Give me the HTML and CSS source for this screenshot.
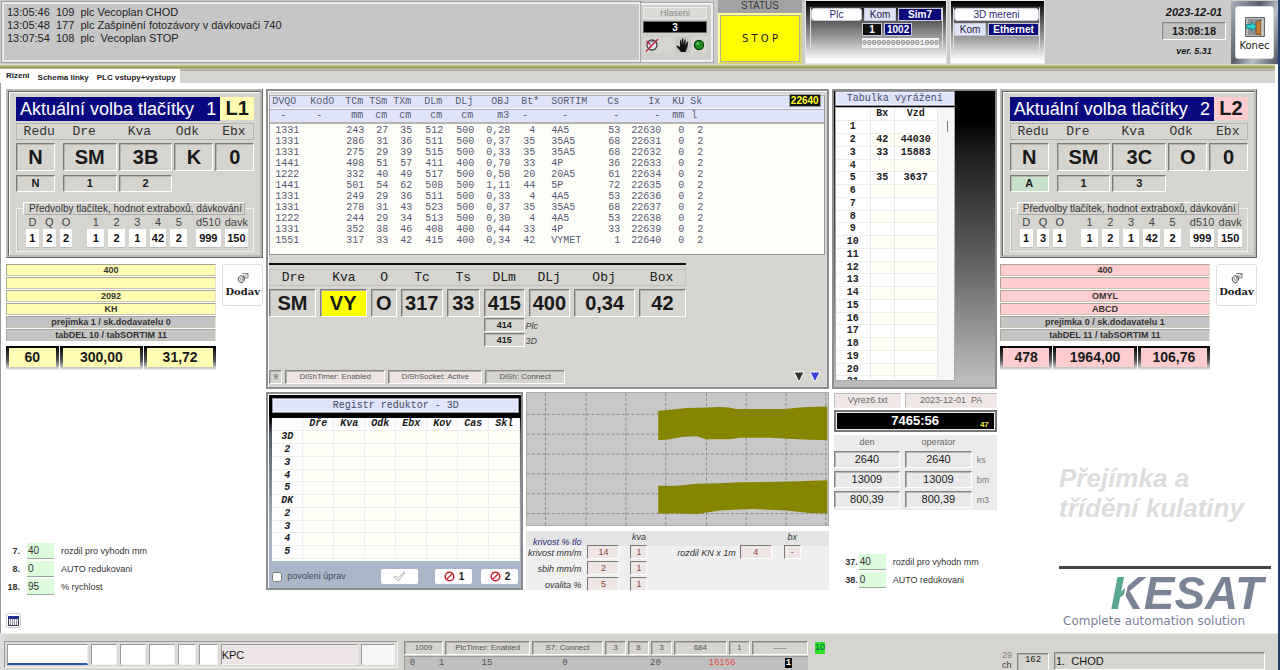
FILE: index.html
```html
<!DOCTYPE html>
<html lang="cs">
<head>
<meta charset="utf-8">
<title>Přejímka a třídění kulatiny</title>
<link rel="stylesheet" href="styles.css">
</head>
<body>
<header class="top">
  <div class="log"><pre>13:05:46  109  plc Vecoplan CHOD
13:05:48  177  plc Zašpinění fotozávory v dávkovači 740
13:07:54  108  plc  Vecoplan STOP</pre></div>
  <section class="alerts">
    <div class="alerts-title">Hlaseni</div>
    <div class="alerts-count">3</div>
    <div class="alerts-icons">
      <svg width="16" height="16" viewBox="0 0 16 16"><circle cx="8" cy="8" r="5" fill="#dfe6f0" stroke="#444" stroke-width="1.3"/><path d="M5.500 5.500a4 4 0 0 1 5 0M6 11l4-6" stroke="#5d7390" stroke-width="1" fill="none"/><path d="M2 14.500L14 2M2.500 4l4 4" stroke="#c8283c" stroke-width="1.400"/></svg>
      <span class="hand"><svg width="16" height="16" viewBox="0 0 16 16"><path d="M6 15L1.500 9.500l1-1L5 10V3.500l1.200-.4L7 8V1.500h1.300L8.700 8l.8-5.500 1.200.2L10.500 8.500l1.700-4 1 .4-1 6.100L10.500 15z" fill="#111"/></svg></span>
      <svg width="12" height="12" viewBox="0 0 12 12"><circle cx="6" cy="6" r="4.600" fill="#1e8a1e" stroke="#0c430c" stroke-width="1.200"/><circle cx="4.800" cy="4.500" r="1.500" fill="#5fc25f"/></svg>
    </div>
  </section>
  <section class="status">
    <div class="status-title">STATUS</div>
    <button class="stop" type="button">S T O P</button>
  </section>
  <section class="comm comm-plc">
    <div class="comm-inner">
      <div class="comm-row"><span class="chip chip-name">Plc</span><span class="chip chip-kom">Kom</span><span class="chip chip-navy grow">Sim7</span></div>
      <div class="comm-row offset"><span class="chip chip-black">1</span><span class="chip chip-navy">1002</span></div>
      <div class="comm-row offset"><span class="bits">0000000000001000</span></div>
    </div>
  </section>
  <section class="comm comm-3d">
    <div class="comm-inner">
      <div class="comm-row"><span class="chip chip-name grow">3D mereni</span></div>
      <div class="comm-row"><span class="chip chip-kom">Kom</span><span class="chip chip-navy grow">Ethernet</span></div>
    </div>
  </section>
  <div class="clock">
    <div class="date">2023-12-01</div>
    <div class="time sunk">13:08:18</div>
    <div class="ver">ver. 5.31</div>
  </div>
  <div class="exit">
    <button type="button">
      <svg width="20" height="20" viewBox="0 0 20 20"><path d="M.5.5h19v19H.5z" fill="#b9b9b9" stroke="#666"/><path d="M3 2h14v16H3z" fill="#8a9298"/><path d="M11 5l5-2v15l-5-1z" fill="#c47f35" stroke="#6b3d10" stroke-width=".8"/><path d="M17 3v15" stroke="#eee"/><path d="M1.500 7.500h5V5l5 4.500-5 4.500v-2.500h-5z" fill="#25d3d3" stroke="#0b6b6b" stroke-width=".6"/></svg>
      <span>Konec</span>
    </button>
  </div>
</header>

<nav class="tabs">
  <a href="#rizeni" class="active">Rizeni</a><a href="#schema">Schema linky</a><a href="#plc">PLC vstupy+vystupy</a>
</nav>

<main class="board">
  <div class="col side line1">
    <section class="panel choice">
      <div class="choice-head"><h2><span>Aktuální volba tlačítky</span><span>1</span></h2><b>L1</b></div>
      <div class="keys key-labels"><span>Redu</span><span>Dre</span><span>Kva</span><span>Odk</span><span>Ebx</span></div>
      <div class="keys big"><span>N</span><span>SM</span><span>3B</span><span>K</span><span>0</span></div>
      <div class="keys small"><span>N</span><span>1</span><span>2</span></div>
      <fieldset>
        <legend>Předvolby tlačítek, hodnot extraboxů, dávkování</legend>
        <div class="presets">
          <label class="s">D<input value="1"></label><label class="s">Q<input value="2"></label><label class="s">O<input value="2"></label>
          <label class="m first">1<input value="1"></label><label class="m">2<input value="2"></label><label class="m">3<input value="1"></label><label class="m">4<input value="42"></label><label class="m">5<input value="2"></label>
          <label class="l first">d510<input value="999"></label><label class="l">davk<input value="150"></label>
        </div>
      </fieldset>
    </section>
    <section class="supplier">
      <div class="sup-list">
        <p>400</p><p></p><p>2092</p><p>KH</p><p class="grey">prejimka 1 / sk.dodavatelu 0</p><p class="grey">tabDEL 10 / tabSORTIM 11</p>
        <div class="totals"><span class="t1">60</span><span class="t2">300,00</span><span class="t3">31,72</span></div>
      </div>
      <button class="dodav" type="button"><svg width="12" height="12" viewBox="0 0 12 12"><path d="M5 1.500h6v4.500H7M6 3.500l2 1 3-3" fill="#f6f3e4" stroke="#666" stroke-width=".8"/><path d="M1 6l3-2.500 3 1.500.5 3L5 11 2 9.500z" fill="#eee" stroke="#444" stroke-width=".9"/><path d="M3 6l2 3M5 5l1.500 3" stroke="#555" stroke-width=".7"/></svg><span>Dodav</span></button>
    </section>
    <div class="settings">
      <label><b>7.</b><input value="40"><span>rozdil pro vyhodn mm</span></label>
      <label><b>8.</b><input value="0"><span>AUTO redukovani</span></label>
      <label><b>18.</b><input value="95"><span>% rychlost</span></label>
    </div>
    <button class="grid-btn" type="button" aria-label="Tabulka"><svg width="11" height="10" viewBox="0 0 11 10"><path d="M.5.500h10v9H.5z" fill="#fff" stroke="#334"/><path d="M0 0h11v3H0z" fill="#22308c"/><path d="M2.500 3v6M4.500 3v6M6.500 3v6M8.500 3v6" stroke="#778" stroke-width=".8"/></svg></button>
  </div>

  <div class="col center">
    <section class="panel live">
      <div class="logs">
        <table>
          <colgroup><col class="w34"><col class="w32"><col class="w29"><col class="w24"><col class="w24"><col class="w31"><col class="w31"><col class="w36"><col class="w30"><col class="w50"><col class="w30"><col class="w41"><col class="w24"><col class="w18"><col></colgroup>
          <thead>
            <tr><th>DVQO</th><th>KodO</th><th>TCm</th><th>TSm</th><th>TXm</th><th>DLm</th><th>DLj</th><th>OBJ</th><th>Bt*</th><th class="ml">SORTIM</th><th>Cs</th><th>Ix</th><th>KU</th><th>Sk</th><th></th></tr>
            <tr><th class="c">-</th><th class="c">-</th><th>mm</th><th>cm</th><th>cm</th><th>cm</th><th>cm</th><th>m3</th><th class="c">-</th><th class="c">-</th><th>-</th><th>-</th><th>mm</th><th class="c">l</th><th></th></tr>
          </thead>
          <tbody>
            <tr><td>1331</td><td></td><td>243</td><td>27</td><td>35</td><td>512</td><td>500</td><td>0,28</td><td>4</td><td>4A5</td><td>53</td><td>22630</td><td>0</td><td>2</td><td></td></tr>
            <tr><td>1331</td><td></td><td>286</td><td>31</td><td>36</td><td>511</td><td>500</td><td>0,37</td><td>35</td><td>35A5</td><td>68</td><td>22631</td><td>0</td><td>2</td><td></td></tr>
            <tr><td>1331</td><td></td><td>275</td><td>29</td><td>39</td><td>515</td><td>500</td><td>0,33</td><td>35</td><td>35A5</td><td>68</td><td>22632</td><td>0</td><td>2</td><td></td></tr>
            <tr><td>1441</td><td></td><td>498</td><td>51</td><td>57</td><td>411</td><td>400</td><td>0,79</td><td>33</td><td>4P</td><td>36</td><td>22633</td><td>0</td><td>2</td><td></td></tr>
            <tr><td>1222</td><td></td><td>332</td><td>40</td><td>49</td><td>517</td><td>500</td><td>0,58</td><td>20</td><td>20A5</td><td>61</td><td>22634</td><td>0</td><td>2</td><td></td></tr>
            <tr><td>1441</td><td></td><td>501</td><td>54</td><td>62</td><td>508</td><td>500</td><td>1,11</td><td>44</td><td>5P</td><td>72</td><td>22635</td><td>0</td><td>2</td><td></td></tr>
            <tr><td>1331</td><td></td><td>249</td><td>29</td><td>36</td><td>511</td><td>500</td><td>0,33</td><td>4</td><td>4A5</td><td>53</td><td>22636</td><td>0</td><td>2</td><td></td></tr>
            <tr><td>1331</td><td></td><td>278</td><td>31</td><td>43</td><td>523</td><td>500</td><td>0,37</td><td>35</td><td>35A5</td><td>68</td><td>22637</td><td>0</td><td>2</td><td></td></tr>
            <tr><td>1222</td><td></td><td>244</td><td>29</td><td>34</td><td>513</td><td>500</td><td>0,30</td><td>4</td><td>4A5</td><td>53</td><td>22638</td><td>0</td><td>2</td><td></td></tr>
            <tr><td>1331</td><td></td><td>352</td><td>38</td><td>46</td><td>408</td><td>400</td><td>0,44</td><td>33</td><td>4P</td><td>33</td><td>22639</td><td>0</td><td>2</td><td></td></tr>
            <tr><td>1551</td><td></td><td>317</td><td>33</td><td>42</td><td>415</td><td>400</td><td>0,34</td><td>42</td><td>VYMET</td><td>1</td><td>22640</td><td>0</td><td>2</td><td></td></tr>
          </tbody>
        </table>
        <span class="last-ix">22640</span>
      </div>
      <div class="current">
        <div class="cur-grid cur-labels"><span>Dre</span><span>Kva</span><span>O</span><span>Tc</span><span>Ts</span><span>DLm</span><span>DLj</span><span>Obj</span><span>Box</span></div>
        <div class="cur-grid cur-values"><b>SM</b><b class="yellow">VY</b><b>O</b><b>317</b><b>33</b><b>415</b><b>400</b><b>0,34</b><b>42</b></div>
        <div class="cur-grid cur-sub"><b>414</b><i>Plc</i><b>415</b><i>3D</i></div>
      </div>
      <div class="live-status">
        <span class="sunk">9</span><span class="sunk pink w100">DiShTimer: Enabled</span><span class="sunk pink w94">DiShSocket: Active</span><span class="sunk w80">DiSh: Connect</span>
        <svg class="arrows" width="28" height="14" viewBox="0 0 28 14"><path d="M2 2h10L7 12z" fill="#333" stroke="#fff"/><path d="M18 2h10l-5 10z" fill="#3c3cd8" stroke="#fff"/></svg>
      </div>
    </section>

    <div class="lower">
      <section class="panel reg">
        <h3>Registr reduktor - 3D</h3>
        <table>
          <thead><tr><th></th><th>Dře</th><th>Kva</th><th>Odk</th><th>Ebx</th><th>Kov</th><th>Čas</th><th>Skl</th></tr></thead>
          <tbody>
            <tr><th>3D</th><td></td><td></td><td></td><td></td><td></td><td></td><td></td></tr>
            <tr><th>2</th><td></td><td></td><td></td><td></td><td></td><td></td><td></td></tr>
            <tr><th>3</th><td></td><td></td><td></td><td></td><td></td><td></td><td></td></tr>
            <tr><th>4</th><td></td><td></td><td></td><td></td><td></td><td></td><td></td></tr>
            <tr><th>5</th><td></td><td></td><td></td><td></td><td></td><td></td><td></td></tr>
            <tr><th>DK</th><td></td><td></td><td></td><td></td><td></td><td></td><td></td></tr>
            <tr><th>2</th><td></td><td></td><td></td><td></td><td></td><td></td><td></td></tr>
            <tr><th>3</th><td></td><td></td><td></td><td></td><td></td><td></td><td></td></tr>
            <tr><th>4</th><td></td><td></td><td></td><td></td><td></td><td></td><td></td></tr>
            <tr><th>5</th><td></td><td></td><td></td><td></td><td></td><td></td><td></td></tr>
          </tbody>
        </table>
        <div class="reg-foot">
          <label><input type="checkbox"> povoleni úprav</label>
          <button type="button" class="ok" aria-label="OK"><svg width="13" height="11" viewBox="0 0 13 11"><path d="M1 6l2-1 2 2.500L11 1l1 .5L5.500 10z" fill="#fff" stroke="#aaa" stroke-width=".9"/></svg></button>
          <button type="button"><svg width="11" height="11" viewBox="0 0 11 11"><circle cx="5.500" cy="5.500" r="4.300" fill="none" stroke="#c8202c" stroke-width="1.500"/><path d="M2.500 8.500l6-6" stroke="#c8202c" stroke-width="1.300"/></svg>1</button>
          <button type="button"><svg width="11" height="11" viewBox="0 0 11 11"><circle cx="5.500" cy="5.500" r="4.300" fill="none" stroke="#c8202c" stroke-width="1.500"/><path d="M2.500 8.500l6-6" stroke="#c8202c" stroke-width="1.300"/></svg>2</button>
        </div>
      </section>
      <div class="profile">
        <svg class="chart" viewBox="0 0 302 133" preserveAspectRatio="none">
          <path d="M18.500 0v133M59.500 0v133M99.500 0v133M139.500 0v133M180.500 0v133M220.500 0v133M260.500 0v133M300.500 0v133M0 21.500h302M0 41.500h302M0 61.500h302M0 81.500h302M0 101.500h302M0 121.500h302" stroke="#8c8c8c" stroke-dasharray="3 2" fill="none"/>
          <path d="M132 18L144 17 161 15 180 14.500 194 14 203 14.500 210 16H260L274 14.500 284 14 302 13.500V47.500L284 47 262 46 244 45 214 45 204 46.500 180 46.500 171 43.500 157 44 144 46.500 132 47.500z" fill="#868500"/>
          <path d="M132 93.500L150 93.500 171 91.500 194 91 214 90 250 89.500 274 89 286 88.500 302 88V121.500L284 121 261 118.500 227 117 214 117.500 194 118.500 171 122 150 121.500 132 121.500z" fill="#868500"/>
        </svg>
        <div class="params">
          <div class="pgrid left">
            <span class="navy">krivost % tlo</span><i></i><span class="mid">kva</span>
            <label for="kr">krivost mm/m</label><input id="kr" value="14"><input aria-label="kva krivost" value="1">
            <label for="sb">sbih mm/m</label><input id="sb" value="2"><input aria-label="kva sbih" value="1">
            <label for="ov">ovalita %</label><input id="ov" value="5"><input aria-label="kva ovalita" value="1">
          </div>
          <div class="pgrid right">
            <i></i><i></i><span class="mid">bx</span>
            <label for="kn">rozdil KN x 1m</label><input id="kn" value="4"><input aria-label="bx" value="-">
          </div>
        </div>
      </div>
    </div>
  </div>

  <div class="col third">
    <section class="panel eject">
      <h3>Tabulka vyrážení</h3>
      <div class="eject-box">
        <table>
          <thead><tr><th></th><th>Bx</th><th>Vzd</th></tr></thead>
          <tbody>
            <tr><th>1</th><td></td><td></td></tr><tr><th>2</th><td>42</td><td>44030</td></tr><tr><th>3</th><td>33</td><td>15883</td></tr><tr><th>4</th><td></td><td></td></tr><tr><th>5</th><td>35</td><td>3637</td></tr>
            <tr><th>6</th><td></td><td></td></tr><tr><th>7</th><td></td><td></td></tr><tr><th>8</th><td></td><td></td></tr><tr><th>9</th><td></td><td></td></tr><tr><th>10</th><td></td><td></td></tr>
            <tr><th>11</th><td></td><td></td></tr><tr><th>12</th><td></td><td></td></tr><tr><th>13</th><td></td><td></td></tr><tr><th>14</th><td></td><td></td></tr><tr><th>15</th><td></td><td></td></tr>
            <tr><th>16</th><td></td><td></td></tr><tr><th>17</th><td></td><td></td></tr><tr><th>18</th><td></td><td></td></tr><tr><th>19</th><td></td><td></td></tr><tr><th>20</th><td></td><td></td></tr><tr><th>21</th><td></td><td></td></tr>
          </tbody>
        </table>
        <div class="track"><span></span></div>
      </div>
    </section>
    <section class="shift">
      <div class="files"><span>Vyrez6.txt</span><span>2023-12-01&nbsp; PA</span></div>
      <div class="timer"><b>7465:56</b><small>47</small></div>
      <div class="sums">
        <em>den</em><em>operator</em><i></i>
        <span class="sunk">2640</span><span class="sunk">2640</span><i>ks</i>
        <span class="sunk">13009</span><span class="sunk">13009</span><i>bm</i>
        <span class="sunk">800,39</span><span class="sunk">800,39</span><i>m3</i>
      </div>
    </section>
    <div class="settings">
      <label><b>37.</b><input value="40"><span>rozdil pro vyhodn mm</span></label>
      <label><b>38.</b><input value="0"><span>AUTO redukovani</span></label>
    </div>
  </div>

  <div class="col side line2">
    <section class="panel choice">
      <div class="choice-head"><h2><span>Aktuální volba tlačítky</span><span>2</span></h2><b>L2</b></div>
      <div class="keys key-labels"><span>Redu</span><span>Dre</span><span>Kva</span><span>Odk</span><span>Ebx</span></div>
      <div class="keys big"><span>N</span><span>SM</span><span>3C</span><span>O</span><span>0</span></div>
      <div class="keys small"><span class="green">A</span><span>1</span><span>3</span></div>
      <fieldset>
        <legend>Předvolby tlačítek, hodnot extraboxů, dávkování</legend>
        <div class="presets">
          <label class="s">D<input value="1"></label><label class="s">Q<input value="3"></label><label class="s">O<input value="1"></label>
          <label class="m first">1<input value="1"></label><label class="m">2<input value="2"></label><label class="m">3<input value="1"></label><label class="m">4<input value="42"></label><label class="m">5<input value="2"></label>
          <label class="l first">d510<input value="999"></label><label class="l">davk<input value="150"></label>
        </div>
      </fieldset>
    </section>
    <section class="supplier">
      <div class="sup-list">
        <p>400</p><p></p><p>OMYL</p><p>ABCD</p><p class="grey">prejimka 0 / sk.dodavatelu 1</p><p class="grey">tabDEL 11 / tabSORTIM 11</p>
        <div class="totals"><span class="t1">478</span><span class="t2">1964,00</span><span class="t3">106,76</span></div>
      </div>
      <button class="dodav" type="button"><svg width="12" height="12" viewBox="0 0 12 12"><path d="M5 1.500h6v4.500H7M6 3.500l2 1 3-3" fill="#f6f3e4" stroke="#666" stroke-width=".8"/><path d="M1 6l3-2.500 3 1.500.5 3L5 11 2 9.500z" fill="#eee" stroke="#444" stroke-width=".9"/><path d="M3 6l2 3M5 5l1.500 3" stroke="#555" stroke-width=".7"/></svg><span>Dodav</span></button>
    </section>
    <div class="brand">
      <p class="claim">Přejímka a<br>třídění kulatiny</p>
      <div class="logo"><span>KESAT</span></div>
      <p class="tagline">Complete automation solution</p>
    </div>
  </div>
</main>

<footer class="bottom">
  <div class="entry">
    <input class="e1" aria-label="1"><input class="e2" aria-label="2"><input class="e2" aria-label="3"><input class="e2" aria-label="4"><input class="e3" aria-label="5"><input class="e3" aria-label="6"><input class="kpc" aria-label="7" value="KPC"><input class="e4" aria-label="8">
  </div>
  <div class="counters">
    <div class="crow"><span class="sunk x39">1009</span><span class="sunk x87">PlcTimer: Enabled</span><span class="sunk x72">S7: Connect</span><span class="sunk x20">3</span><span class="sunk x20">8</span><span class="sunk x20">3</span><span class="sunk x53">684</span><span class="sunk x20">1</span><span class="sunk x57">-----</span></div>
    <div class="cbar"><span class="b15">0</span><span class="b43">1</span><span class="b48">15</span><span class="b108">0</span><span class="b73">20</span><span class="b60 red">16156</span><span class="b39"><b>1</b></span></div>
  </div>
  <span class="ten">10</span>
  <div class="state">
    <div class="ch"><span>29</span><span>ch</span></div>
    <span class="sunk num">162</span>
    <span class="sunk mode">1.&nbsp; CHOD</span>
  </div>
</footer>
</body>
</html>
```

FILE: styles.css
```css
* { box-sizing: border-box; }
html { background: #1c3f6b; }
body {
  margin: 0 2px 0 0;
  min-height: 100vh;
  display: flex;
  flex-direction: column;
  background: #fff;
  color: #1a1a1a;
  font: 9px/11px "Liberation Sans", Arial, sans-serif;
  overflow: hidden;
}
h2, h3, p, pre, fieldset { margin: 0; font: inherit; }
button, input { font: inherit; color: inherit; padding: 0; margin: 0; border-radius: 0; }
input { min-width: 0; }
em, i { font-style: normal; }
svg { display: block; flex: none; }
table { border-collapse: separate; border-spacing: 0; table-layout: fixed; }
th, td { padding: 0; font-weight: normal; }

.sunk {
  border: 1px solid;
  border-color: #868686 #fff #fff #868686;
  box-shadow: inset 1px 1px 0 #b5b2ac;
  text-align: center;
}
.panel {
  border: 2px solid #9c9c9c;
  border-color: #8e8e8e #8a8a8a #8e8e8e #8e8e8e;
  background: #d5d4cf;
  box-shadow: inset 1px 1px 0 #fff;
}

/* header */
.top {
  display: flex;
  height: 65px;
  background: #cbcbcb;
  border-bottom: 1px solid #dcdcd4;
}
.log {
  flex: 1 1 638px;
  max-width: 639px;
  margin: 2px 0 2px 2px;
  border: 2px solid #ececec;
  outline: 1px solid #9a9a9a;
  background: #c6c6c6;
  padding: 2px 3px;
}
.log pre { font: 11px/13px "Liberation Sans", Arial, sans-serif; color: #222; }
.alerts {
  width: 72px;
  margin: 3px 0 2px;
  padding: 2px 4px 0 2px;
  border: 2px solid #f0f0f0;
  border-left: 0;
  outline: 1px solid #a8a8a8;
  background: #cfcecb;
}
.alerts-title { height: 12px; line-height: 10px; background: #dbdad6; color: #8a8a8a; text-align: center; border: 1px solid #e6e6e2; }
.alerts-count { height: 12px; margin-top: 2px; background: #000; color: #fff; font-weight: bold; font-size: 10px; line-height: 11px; text-align: center; border: 1px solid #666; }
.alerts-icons { display: flex; align-items: center; margin-top: 4px; padding-left: 1px; background: #d6d4ce; }
.hand { margin: 0 2px 0 15px; background: #c8c7c4; }
.status { width: 84px; margin-left: 5px; display: flex; flex-direction: column; }
.status-title { height: 13px; background: #a2a2a2; color: #3a3a3a; font-size: 10px; line-height: 12px; text-align: center; }
.stop {
  flex: 1;
  background: #ff0;
  border: 3px solid #ffff6a;
  border-color: #ffff9c #d8d868 #d8d868 #ffff9c;
  outline: 1px solid #b6b68a;
  outline-offset: -3px;
  font: 10px "DejaVu Sans", sans-serif;
}
.comm {
  margin-left: 3px;
  padding: 6px 3px 13px 4px;
  background: linear-gradient(#000 0, #555 30%, #aaa 65%, #fff 96%);
  border: 1px solid #e8e8e8;
}
.comm-plc { width: 142px; }
.comm-3d { width: 95px; padding: 6px 4px 11px 2px; }
.comm-inner { height: 45px; border: 1px solid #ddd; border-top-color: #444; display: flex; flex-direction: column; gap: 2px; }
.comm-row { display: flex; gap: 2px; }
.comm-row.offset { padding-left: 51px; }
.chip { height: 13px; line-height: 12px; border: 1px solid #c8c8d8; text-align: center; font-weight: bold; font-size: 10px; padding: 0 2px; }
.chip-name { width: 51px; background: #fff; color: #282870; font-weight: normal; border-radius: 3px; }
.chip-kom { width: 32px; background: #dfe3f6; color: #22224a; font-weight: normal; }
.chip-navy { background: #0a0a78; color: #fff; }
.chip-black { width: 20px; background: #111; color: #fff; }
.grow { flex: 1; width: auto; }
.bits { background: #f4f4f4; color: #666; font: 8px/10px "Liberation Mono", monospace; }
.clock { margin-left: auto; width: 64px; padding-top: 6px; text-align: center; font-weight: bold; font-size: 11px; }
.date { font-style: italic; line-height: 12px; margin: 0 -6px; }
.time { height: 18px; margin-top: 4px; line-height: 16px; background: #c2c2c2; }
.ver { margin-top: 6px; font-style: italic; font-size: 9px; }
.exit { width: 47px; margin: 1px 0 0 5px; padding: 5px 4px; background: linear-gradient(115deg, #a9b1bc, #59606c 40%, #b8c0c9 65%, #4d5460); }
.exit button {
  width: 100%;
  height: 100%;
  display: flex;
  flex-direction: column;
  align-items: center;
  justify-content: flex-end;
  padding-bottom: 6px;
  gap: 3px;
  border: 1px solid #ddd;
  border-radius: 3px;
  background: #fff;
  font: 10px/12px "DejaVu Sans", sans-serif;
}

/* tabs */
.tabs {
  display: flex;
  height: 18px;
  padding-top: 4px;
  margin-right: 3px;
  background: linear-gradient(#cdcf8e 0, #8d8d4f 3px, #ddd 4px, #8f8f8f 5px, #d5d4cf 6px);
}
.tabs a { background: #fff; color: #222; font: bold 8px/12px "Liberation Sans", Arial, sans-serif; text-decoration: none; padding: 3px 4px 0; height: 14px; line-height: 11px; white-space: nowrap; }
.tabs a.active { padding: 1px 4px 0 6px; }

/* board */
.board {
  flex: 1;
  display: grid;
  grid-template-columns: minmax(0, 257fr) minmax(0, 562fr) minmax(0, 165fr) minmax(0, 257fr);
  column-gap: 3px;
  padding: 6px 21px 5px 5px;
  border-left: 1px solid #999;
}
.col { display: flex; flex-direction: column; }

/* choice panel */
.choice { padding: 5px 6px 3px 7px; border-width: 3px; border-style: ridge; border-color: #b8b8b6; }
.choice-head { display: flex; }
.choice-head h2 { flex: 1; display: flex; justify-content: space-between; padding: 0 4px; background: #0a0a80; color: #fff; font-size: 18px; line-height: 24px; white-space: nowrap; }
.choice-head b { width: 34px; font-size: 20px; line-height: 23px; text-align: center; margin-bottom: 1px; }
.line1 { --tint: #fffcb4; }
.line2 { --tint: #ffccd0; }
.choice-head b { background: var(--tint); }
.keys { display: grid; grid-template-columns: 45fr 54fr 54fr 39fr 39fr; column-gap: 2px; text-align: center; }
.keys.key-labels { margin: 2px 0 3px; border: 1px solid #ecebe8; outline: 1px solid #b4b3af; outline-offset: -1px; font: 13px/15px "Liberation Mono", monospace; color: #333; }
.key-labels span { margin: 0 6px 0 -6px; white-space: nowrap; }
.key-labels span:first-child, .key-labels span:last-child { margin: 0; }
.keys.big span, .keys.small span { border: 1px solid; border-color: #7c7c7c #fff #fff #7c7c7c; box-shadow: inset 1px 1px 0 #b5b2ac; font-weight: bold; }
.keys.big span { font-size: 20px; line-height: 26px; }
.keys.small { margin-top: 4px; font-size: 11px; }
.keys.small span { line-height: 15px; }
.keys.big span:first-child, .keys.small span:first-child { margin-right: 6px; }
.keys .green { background: #c7e0c9; }
fieldset { min-width: 0; margin-top: 10px; padding: 1px 5px 3px 9px; border: 1px solid #efefec; box-shadow: inset 1px 0 0 #bdbcb8; }
legend { width: 100%; margin-left: -3px; padding: 0 5px; border: 1px solid; border-color: #fff #aaa #aaa #fff; font-size: 10px; line-height: 11px; white-space: nowrap; color: #333; }
.presets { display: flex; gap: 4px; font-size: 11px; line-height: 13px; color: #444; }
.presets label { display: flex; flex-direction: column; align-items: center; }
.presets .s { flex: 13 1 0; }
.presets .m { flex: 17 1 0; }
.presets .l { flex: 24 1 0; }
.presets .first { margin-left: 11px; }
.presets .l.first { margin-left: 5px; }
.presets input { width: 100%; height: 19px; border: 0; border-bottom: 1px solid #bbb; background: #fff; color: #111; font-weight: bold; text-align: center; }

/* supplier */
.supplier { display: flex; gap: 6px; margin-top: 6px; align-items: flex-start; }
.sup-list { flex: 1; display: flex; flex-direction: column; gap: 1px; }
.sup-list p { height: 12px; background: var(--tint); border: 1px solid #b9b39a; border-color: #a9a596 #e6e2d4 #c8c3b2 #a9a596; font-weight: bold; line-height: 11px; text-align: center; color: #333; }
.sup-list .grey { background: #c4c4c4; }
.totals { display: flex; gap: 1px; margin-top: 4px; font-size: 14px; font-weight: bold; text-align: center; }
.totals span {
  height: 24px;
  line-height: 19px;
  border: 3px solid transparent;
  border-top-width: 2px;
  background: linear-gradient(var(--tint), var(--tint)) padding-box, linear-gradient(#000, #555 60%, #eee) border-box;
}
.t1 { flex: 50; }
.t2 { flex: 83; }
.t3 { flex: 71; }
.dodav { width: 41px; height: 42px; display: flex; flex-direction: column; align-items: center; justify-content: center; gap: 1px; background: #fff; border: 1px solid #ddd; border-radius: 3px; font: bold 10px/13px "DejaVu Serif", serif; }

/* settings */
.settings { margin-top: auto; display: flex; flex-direction: column; gap: 2px; color: #333; }
.settings label { display: flex; align-items: center; }
.settings b { width: 14px; text-align: right; margin-right: 7px; white-space: nowrap; }
.settings input { width: 27px; height: 16px; border: 0; border-bottom: 1px solid #9a9; background: #dcfcdc; margin-right: 7px; font-size: 10px; padding-left: 1px; }
.third .settings { padding: 0 0 40px 12px; }
.third .settings b { margin-right: 1px; }
.grid-btn { margin-top: 18px; width: 15px; height: 15px; display: flex; align-items: center; justify-content: center; border: 1px solid #ccc; border-radius: 2px; background: #fff; }

/* log list */
.live { min-height: 300px; display: flex; flex-direction: column; padding: 3px 2px 3px 1px; }
.logs { position: relative; min-height: 161px; background: #fefef8; border: 1px solid; border-color: #eee #999 #999 #999; font: 10px/11px "Liberation Mono", monospace; color: #555a72; }
.logs table { width: 100%; }
.logs th { height: 14px; line-height: 12px; background: #dfe4fa; border-top: 1px solid #aeb1bd; border-bottom: 1px solid #f6f6f6; text-align: right; padding-right: 2px; white-space: nowrap; }
.logs tr:last-child th { border-bottom: 2px solid #b5b5b2; }
.logs th.c { text-align: center; }
.logs th.ml, .logs td:nth-child(10) { text-align: left; padding-left: 10px; }
.logs td { height: 11px; text-align: right; padding-right: 1px; white-space: nowrap; }
.logs tbody tr:first-child td { padding-top: 1px; height: 12px; }
.logs th:first-child { padding-right: 8px; }
.logs td:first-child { padding-right: 5px; }
.logs td:nth-child(9) { padding-right: 6px; }
.logs td:nth-child(13) { padding-right: 2px; }
.w18 { width: 18px; } .w24 { width: 24px; } .w29 { width: 29px; } .w30 { width: 30px; }
.w31 { width: 31px; } .w32 { width: 32px; } .w34 { width: 34px; } .w36 { width: 36px; }
.w41 { width: 41px; } .w50 { width: 50px; }
.last-ix { position: absolute; top: -1px; right: 3px; background: #111; color: #ff3; border: 1px solid #999; padding: 0 1px; font: bold 10px/11px "Liberation Sans", Arial, sans-serif; }

/* current log */
.current { width: 75%; margin-top: 8px; border-top: 2px solid #111; padding-top: 4px; }
.cur-grid { display: grid; grid-template-columns: 46fr 46fr 26fr 41fr 33fr 40fr 41fr 60fr 46fr; column-gap: 4px; text-align: center; }
.cur-labels { border: 1px solid #eeedea; outline: 1px solid #c0bfbb; outline-offset: -1px; font: 13px/15px "Liberation Mono", monospace; color: #222; }
.cur-values { margin-top: 3px; font-size: 20px; line-height: 26px; }
.cur-grid b { border: 1px solid; border-color: #7c7c7c #fff #fff #7c7c7c; box-shadow: inset 1px 1px 0 #b5b2ac; }
.cur-grid .yellow { background: #ff0; }
.cur-sub { margin-top: 1px; row-gap: 1px; font-size: 9px; line-height: 12px; }
.cur-sub b { grid-column: 6; }
.cur-sub i { grid-column: 7; text-align: left; font-style: italic; color: #444; margin-left: -3px; line-height: 16px; height: 14px; }
.live-status { margin-top: auto; display: flex; gap: 3px; font-size: 8px; line-height: 12px; color: #555; align-items: center; white-space: nowrap; }
.live-status .sunk:first-child { width: 13px; }
.live-status .w100 { width: 100px; }
.live-status .w94 { width: 94px; }
.live-status .w80 { width: 80px; }
.pink { background: #efe4e4; }
.arrows { margin: 0 5px 0 auto; }

/* reductor register */
.lower { display: grid; grid-template-columns: minmax(0, 257fr) minmax(0, 302fr); column-gap: 3px; margin-top: 3px; }
.reg { display: flex; flex-direction: column; padding: 3px 1px 4px 4px; background: linear-gradient(#000 0, #000 22px, #555c66 40px, #a8b4c4 70%, #a9b7c9); height: 198px; }
.reg h3, .eject h3 { background: #dfe4fa; border: 1px solid #8f93a2; outline: 1px solid #eef; outline-offset: -2px; font: 10px/13px "Liberation Mono", monospace; text-align: center; color: #44496a; }
.reg h3 { margin: 1px 1px 5px 0; }
.reg table { width: 100%; background: #fff; font: italic bold 10px/12px "Liberation Mono", monospace; padding-bottom: 2px; }
.reg th, .reg td { height: 13px; border-right: 1px solid #eee; border-bottom: 1px solid #eeeeea; text-align: center; font-weight: bold; }
.reg tbody tr:nth-child(4n) > * { height: 12px; line-height: 11px; }
.reg td { background: #fffff8; }
.reg th:first-child { width: 31px; }
.reg-foot { margin-top: auto; display: flex; align-items: center; gap: 9px; padding-right: 2px; }
.reg-foot label { margin-right: auto; display: flex; align-items: center; gap: 5px; color: #444c58; white-space: nowrap; }
.reg-foot input { width: 10px; height: 10px; }
.reg-foot button { width: 37px; height: 15px; display: flex; align-items: center; justify-content: center; gap: 4px; background: #fff; border: 0; border-radius: 2px; font-weight: bold; font-size: 10px; }
.reg-foot .ok { margin-right: 8px; }

/* profile chart and parameters */
.profile { display: flex; flex-direction: column; min-width: 0; }
.chart { width: 100%; height: 134px; background: #c8c8c8; border: 1px solid #aaa; }
.params { margin-top: 5px; height: 59px; display: flex; justify-content: space-between; padding-right: 28px; background: linear-gradient(#e4e4e4 15px, #efefef 15px); font-style: italic; color: #333; }
.pgrid { display: grid; grid-template-rows: 12px; grid-auto-rows: 14px; row-gap: 2px; align-content: start; text-align: right; white-space: nowrap; }
.pgrid.left { grid-template-columns: 55px 32px 22px; column-gap: 6px; }
.pgrid.left > :nth-child(3n) { margin-left: 5px; }
.pgrid.right { grid-template-columns: auto 32px 25px; column-gap: 4px; }
.pgrid.right > :nth-child(3n) { margin-left: 8px; }
.pgrid .navy { color: #2c2c7c; line-height: 22px; height: 12px; }
.pgrid .mid { text-align: center; line-height: 13px; }
.pgrid label { line-height: 16px; }
.pgrid input { width: auto; height: 14px; border: 1px solid; border-color: #777 #fff #fff #777; background: #f0e5e5; color: #844; text-align: center; font-style: normal; }

/* ejection table */
.eject { height: 300px; padding: 0 40px 6px 1px; background: linear-gradient(#000 10%, #1c1c1c 20%, #666 60%, #bbb 97%); display: flex; flex-direction: column; box-shadow: none; }
.eject h3 { font-size: 10px; line-height: 13px; white-space: nowrap; }
.eject-box { flex: 1; min-height: 0; margin-top: 1px; display: flex; overflow: hidden; background: #fff; border: 1px solid #aaa; font: bold 10px/12px "Liberation Mono", monospace; }
.eject table { flex: 1; }
.eject th, .eject td { border-right: 1px solid #e8e8e8; border-bottom: 1px solid #eeeeea; text-align: center; font-weight: bold; color: #222; }
.eject td:nth-child(2), .eject thead th:nth-child(2) { width: 24px; }
.eject th:first-child { width: 35px; }
.eject tbody tr:nth-child(even) td { background: #fffff6; }
.eject tbody tr { height: 13px; }
.eject tbody tr:nth-child(4n) { line-height: 11px; height: 12px; }
.track { width: 16px; background: #f6f6f6; padding: 13px 0 0 9px; }
.track span { display: block; width: 1px; height: 11px; background: #777; }

/* shift totals */
.shift { margin-top: 4px; padding-left: 2px; }
.files { display: flex; gap: 4px; text-align: center; color: #666; }
.files span { background: #f0e6e6; border: 1px solid #c5c5c5; border-color: #bbb #eee #eee #bbb; height: 15px; line-height: 13px; flex: 67; }
.files span + span { flex: 91; }
.timer { position: relative; height: 22px; margin-top: 2px; background: #000; border: 2px solid #777; outline: 1px solid #eee; outline-offset: -3px; text-align: center; color: #fff; font-size: 13px; line-height: 18px; }
.timer small { position: absolute; right: 6px; bottom: 0; font: bold 8px/10px "Liberation Sans", Arial, sans-serif; color: #ee3; }
.sums { margin-top: 3px; padding-bottom: 2px; display: grid; grid-template-columns: 66fr 66fr 20fr; grid-template-rows: 13px; grid-auto-rows: 17px; column-gap: 5px; row-gap: 3px; background: #ebebeb; }
.sums em { text-align: center; line-height: 15px; color: #666; }
.sums .sunk { height: 17px; line-height: 15px; font-size: 11px; background: #e9e9e9; }
.sums i { line-height: 19px; color: #777; }
.sums em + i { visibility: hidden; }

/* brand */
.brand { margin-top: auto; align-self: flex-end; margin-right: -14px; width: 212px; }
.claim { font: italic bold 26px/30px "Liberation Sans", Arial, sans-serif; color: #dcdcdc; white-space: nowrap; }
.logo {
  margin-top: 43px;
  border-top: 3px solid #444;
  padding: 2px 4px 0 0;
  text-align: right;
  font: italic bold 46px/44px "Liberation Sans", Arial, sans-serif;
}
.logo span {
  display: inline-block;
  padding: 0 4px 0 0;
  color: transparent;
  background: linear-gradient(102deg, #5aa893 17px, #fff 18px, #fff 19px, #7b8496 20px);
  background-clip: text;
  -webkit-background-clip: text;
}
.tagline { font: 12px/13px "DejaVu Sans", sans-serif; color: #7a7f9a; padding-left: 4px; white-space: nowrap; }

/* footer */
.bottom { display: flex; height: 37px; background: #d5d4cf; border-left: 4px solid #ddd; border-top: 1px solid #eee; padding-right: 13px; overflow: hidden; }
.entry { flex: 0 0 394px; margin: 7px 0 2px; padding: 2px; display: flex; gap: 3px; border: 1px solid; border-color: #999 #f4f4f4 #f4f4f4 #999; background: #dcdbd7; }
.entry input { flex: 25; width: 0; border: 1px solid; border-color: #999 #eee #eee #999; background: #fff; font-size: 11px; }
.entry .e1 { flex: 82; border-bottom: 2px solid #2b56a5; }
.entry .e3 { flex: 17; }
.entry .kpc { flex: 141; background: #ece4e5; }
.entry .e4 { flex: 33; background: #f6f6f8; }
.counters { flex: 0 0 404px; margin-left: 6px; padding-top: 7px; color: #555; }
.crow { display: flex; gap: 2px; font-size: 8px; line-height: 12px; }
.crow .sunk { height: 14px; white-space: nowrap; flex: 20; }
.crow .x39 { flex: 39; } .crow .x87 { flex: 87; } .crow .x72 { flex: 72; } .crow .x53 { flex: 53; } .crow .x57 { flex: 57; }
.cbar { display: flex; margin-top: 1px; height: 15px; background: #bfbfbf; border-top: 1px solid #999; border-left: 1px solid #999; font: 9px/13px "Liberation Mono", monospace; }
.cbar span { text-align: center; white-space: nowrap; }
.b15 { width: 15px; } .b43 { width: 43px; } .b48 { width: 48px; } .b108 { width: 108px; }
.b73 { width: 73px; } .b60 { width: 60px; } .b39 { margin-left: auto; width: 39px; }
.red { color: #e0504e; }
.cbar b { background: #000; color: #fff; padding: 0 1px; line-height: 9px; }
.ten { height: 12px; margin: 8px 0 0 7px; background: #2be02b; color: #064; }
.state { margin-left: auto; display: flex; gap: 5px; }
.ch { display: flex; flex-direction: column; margin-top: 16px; line-height: 10px; color: #888; }
.ch span + span { color: #444; }
.state .num { width: 32px; height: 20px; margin-top: 19px; font: 9px/12px "Liberation Mono", monospace; }
.state .mode { width: 211px; height: 18px; margin-top: 18px; text-align: left; font-size: 11px; line-height: 17px; padding-left: 1px; }
```
